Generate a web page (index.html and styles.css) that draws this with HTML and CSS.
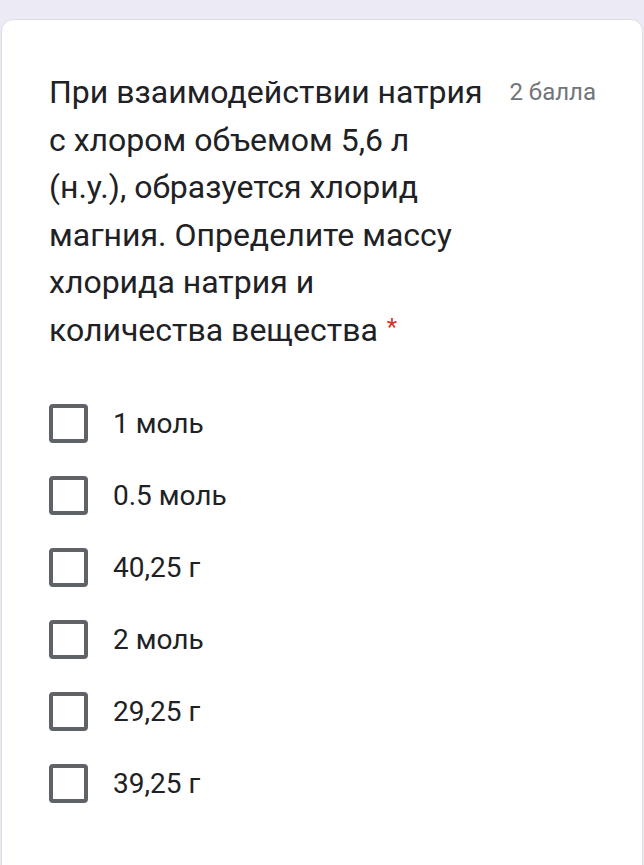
FILE: index.html
```html
<!DOCTYPE html>
<html lang="ru">
<head>
<meta charset="utf-8">
<link rel="stylesheet" href="styles.css">
</head>
<body>
<div class="card">
  <div class="header">
    <div class="question">При взаимодействии натрия с хлором объемом 5,6 л (н.у.), образуется хлорид магния. Определите массу хлорида натрия и количества вещества<span class="req">*</span></div>
    <div class="points">2 балла</div>
  </div>
  <div class="options">
    <label class="option"><span class="box"></span><span class="label">1 моль</span></label>
    <label class="option"><span class="box"></span><span class="label">0.5 моль</span></label>
    <label class="option"><span class="box"></span><span class="label">40,25 г</span></label>
    <label class="option"><span class="box"></span><span class="label">2 моль</span></label>
    <label class="option"><span class="box"></span><span class="label">29,25 г</span></label>
    <label class="option"><span class="box"></span><span class="label">39,25 г</span></label>
  </div>
</div>
</body>
</html>
```
FILE: styles.css
```css
html, body {
  margin: 0;
  padding: 0;
  background: #ecebf5;
  height: 100%;
}
body {
  padding-top: 19px;
  padding-left: 1px;
  padding-right: 1px;
  box-sizing: border-box;
}
.card {
  background: #fff;
  border: 1px solid #dcdce2;
  border-radius: 12px;
  height: 860px;
  box-sizing: border-box;
  padding: 49px 46px 0 47px;
}
.header {
  display: flex;
  align-items: flex-start;
}
.question {
  width: 442px;
  font-family: Roboto, "Noto Sans", sans-serif;
  font-size: 32px;
  line-height: 47.5px;
  color: #202124;
}
.req {
  display: inline-block;
  margin-left: 9px;
  color: #d93025;
  font-size: 24px;
  line-height: 1;
  vertical-align: 6px;
}
.points {
  margin-left: auto;
  font-family: Roboto, sans-serif;
  font-size: 24px;
  color: #70757a;
  line-height: 47.5px;
  white-space: nowrap;
}
.options {
  margin-top: 33px;
  display: flex;
  flex-direction: column;
}
.option {
  height: 72px;
  display: flex;
  align-items: center;
  gap: 25px;
}
.box {
  width: 39px;
  height: 39px;
  box-sizing: border-box;
  border: 4px solid #5f6368;
  border-radius: 4px;
  flex: none;
}
.label {
  font-family: Roboto, sans-serif;
  font-size: 28px;
  color: #202124;
}
```
